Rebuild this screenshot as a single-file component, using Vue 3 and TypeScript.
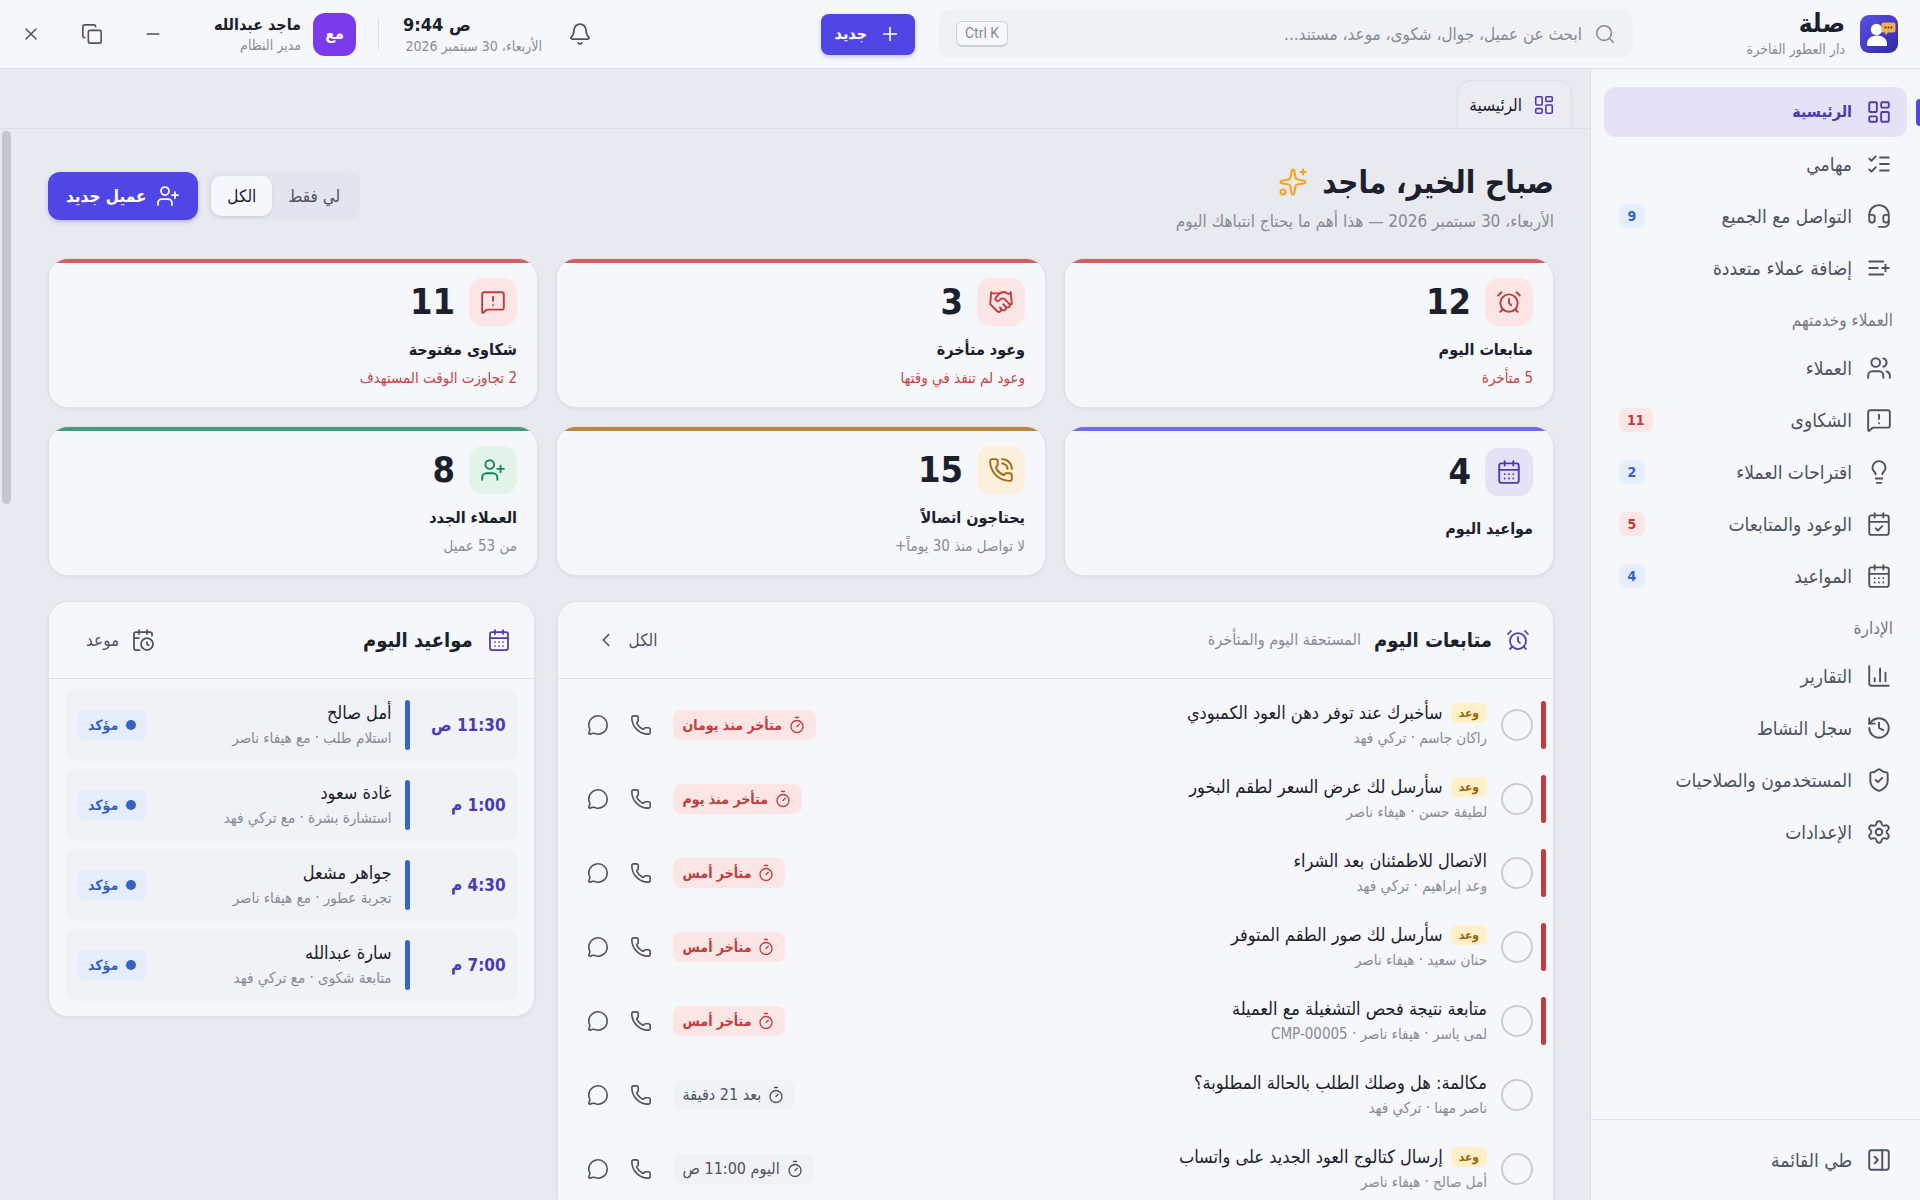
<script setup lang="ts">
import { h, ref } from 'vue'

type Tone = 'red' | 'blue' | 'indigo' | 'amber' | 'green'

const calendarBase = '<path d="M8 2v4M16 2v4M3 10h18"/><rect width="18" height="18" x="3" y="4" rx="2"/>'
const phonePath =
  '<path d="M13.832 16.568a1 1 0 0 0 1.213-.303l.355-.465A2 2 0 0 1 17 15h3a2 2 0 0 1 2 2v3a2 2 0 0 1-2 2A18 18 0 0 1 2 4a2 2 0 0 1 2-2h3a2 2 0 0 1 2 2v3a2 2 0 0 1-.8 1.6l-.468.351a1 1 0 0 0-.292 1.233 14 14 0 0 0 6.392 6.384"/>'

const icons: Record<string, string> = {
  dashboard:
    '<rect width="7" height="9" x="3" y="3" rx="1"/><rect width="7" height="5" x="14" y="3" rx="1"/><rect width="7" height="9" x="14" y="12" rx="1"/><rect width="7" height="5" x="3" y="16" rx="1"/>',
  checks: '<path d="m3 17 2 2 4-4M3 7l2 2 4-4M13 6h8M13 12h8M13 18h8"/>',
  headset:
    '<path d="M3 11h3a2 2 0 0 1 2 2v3a2 2 0 0 1-2 2H5a2 2 0 0 1-2-2v-5Zm0 0a9 9 0 1 1 18 0m0 0v5a2 2 0 0 1-2 2h-1a2 2 0 0 1-2-2v-3a2 2 0 0 1 2-2h3Z"/><path d="M21 16v2a4 4 0 0 1-4 4h-5"/>',
  listPlus: '<path d="M11 12H3M16 6H3M16 18H3M18 9v6M21 12h-6"/>',
  users:
    '<path d="M16 21v-2a4 4 0 0 0-4-4H6a4 4 0 0 0-4 4v2"/><circle cx="9" cy="7" r="4"/><path d="M22 21v-2a4 4 0 0 0-3-3.87M16 3.13a4 4 0 0 1 0 7.75"/>',
  complaint:
    '<path d="M22 17a2 2 0 0 1-2 2H6.828a2 2 0 0 0-1.414.586l-2.202 2.202A.71.71 0 0 1 2 21.286V5a2 2 0 0 1 2-2h16a2 2 0 0 1 2 2z"/><path d="M12 15h.01M12 7v4"/>',
  bulb: '<path d="M15 14c.2-1 .7-1.7 1.5-2.5 1-.9 1.5-2.2 1.5-3.5A6 6 0 0 0 6 8c0 1 .2 2.2 1.5 3.5.7.7 1.3 1.5 1.5 2.5M9 18h6M10 22h4"/>',
  calendarCheck: calendarBase + '<path d="m9 16 2 2 4-4"/>',
  calendarDays: calendarBase + '<path d="M8 14h.01M12 14h.01M16 14h.01M8 18h.01M12 18h.01M16 18h.01"/>',
  calendarClock:
    '<path d="M16 14v2.2l1.6 1M16 2v4M21 7.5V6a2 2 0 0 0-2-2H5a2 2 0 0 0-2 2v14a2 2 0 0 0 2 2h3.5M3 10h5M8 2v4"/><circle cx="16" cy="16" r="6"/>',
  chart: '<path d="M3 3v16a2 2 0 0 0 2 2h16M18 17V9M13 17V5M8 17v-3"/>',
  history: '<path d="M3 12a9 9 0 1 0 9-9 9.75 9.75 0 0 0-6.74 2.74L3 8"/><path d="M3 3v5h5M12 7v5l4 2"/>',
  shield:
    '<path d="M20 13c0 5-3.5 7.5-7.66 8.95a1 1 0 0 1-.67-.01C7.5 20.5 4 18 4 13V6a1 1 0 0 1 1-1c2 0 4.5-1.2 6.24-2.72a1.17 1.17 0 0 1 1.52 0C14.51 3.81 17 5 19 5a1 1 0 0 1 1 1z"/><path d="m9 12 2 2 4-4"/>',
  settings:
    '<path d="M9.671 4.136a2.34 2.34 0 0 1 4.659 0 2.34 2.34 0 0 0 3.319 1.915 2.34 2.34 0 0 1 2.33 4.033 2.34 2.34 0 0 0 0 3.831 2.34 2.34 0 0 1-2.33 4.033 2.34 2.34 0 0 0-3.319 1.915 2.34 2.34 0 0 1-4.659 0 2.34 2.34 0 0 0-3.32-1.915 2.34 2.34 0 0 1-2.33-4.033 2.34 2.34 0 0 0 0-3.831A2.34 2.34 0 0 1 6.35 6.051a2.34 2.34 0 0 0 3.319-1.915"/><circle cx="12" cy="12" r="3"/>',
  panelClose: '<rect width="18" height="18" x="3" y="3" rx="2"/><path d="M15 3v18M8 9l3 3-3 3"/>',
  search: '<path d="m21 21-4.34-4.34"/><circle cx="11" cy="11" r="8"/>',
  plus: '<path d="M5 12h14M12 5v14"/>',
  minus: '<path d="M5 12h14"/>',
  close: '<path d="M18 6 6 18M6 6l12 12"/>',
  copy: '<rect width="14" height="14" x="8" y="8" rx="2"/><path d="M4 16c-1.1 0-2-.9-2-2V4c0-1.1.9-2 2-2h10c1.1 0 2 .9 2 2"/>',
  bell: '<path d="M10.268 21a2 2 0 0 0 3.464 0M3.262 15.326A1 1 0 0 0 4 17h16a1 1 0 0 0 .74-1.673C19.41 13.956 18 12.499 18 8A6 6 0 0 0 6 8c0 4.499-1.411 5.956-2.738 7.326"/>',
  sparkles:
    '<path d="M11.017 2.814a1 1 0 0 1 1.966 0l1.051 5.558a2 2 0 0 0 1.594 1.594l5.558 1.051a1 1 0 0 1 0 1.966l-5.558 1.051a2 2 0 0 0-1.594 1.594l-1.051 5.558a1 1 0 0 1-1.966 0l-1.051-5.558a2 2 0 0 0-1.594-1.594l-5.558-1.051a1 1 0 0 1 0-1.966l5.558-1.051a2 2 0 0 0 1.594-1.594zM20 2v4M22 4h-4"/><circle cx="4" cy="20" r="2"/>',
  userPlus: '<path d="M16 21v-2a4 4 0 0 0-4-4H6a4 4 0 0 0-4 4v2M19 8v6M22 11h-6"/><circle cx="9" cy="7" r="4"/>',
  alarm:
    '<circle cx="12" cy="13" r="8"/><path d="M12 9v4l2 2M5 3 2 6M22 6l-3-3M6.38 18.7 4 21M17.64 18.67 20 21"/>',
  handshake:
    '<path d="m11 17 2 2a1 1 0 1 0 3-3"/><path d="m14 14 2.5 2.5a1 1 0 1 0 3-3l-3.88-3.88a3 3 0 0 0-4.24 0l-.88.88a1 1 0 1 1-3-3l2.81-2.81a5.79 5.79 0 0 1 7.06-.87l.47.28a2 2 0 0 0 1.42.25L21 4"/><path d="m21 3 1 11h-2M3 3 2 14l6.5 6.5a1 1 0 1 0 3-3M3 4h8"/>',
  phone: phonePath,
  phoneCall: '<path d="M13 2a9 9 0 0 1 9 9M13 6a5 5 0 0 1 5 5"/>' + phonePath,
  chat: '<path d="M2.992 16.342a2 2 0 0 1 .094 1.167l-1.065 3.29a1 1 0 0 0 1.236 1.168l3.413-.998a2 2 0 0 1 1.099.092 10 10 0 1 0-4.777-4.719"/>',
  timer: '<path d="M10 2h4M12 14l3-3"/><circle cx="12" cy="14" r="8"/>',
  chevron: '<path d="m15 18-6-6 6-6"/>',
}

const Icon = (props: { name: string; size: number }) =>
  h('svg', {
    width: props.size,
    height: props.size,
    viewBox: '0 0 24 24',
    fill: 'none',
    stroke: 'currentColor',
    'stroke-width': 1.75,
    'stroke-linecap': 'round',
    'stroke-linejoin': 'round',
    'aria-hidden': 'true',
    innerHTML: icons[props.name],
  })
Icon.props = ['name', 'size']

interface NavItem {
  label: string
  icon: string
  badge?: number
  tone?: Tone
  active?: boolean
}

const navGroups: { title?: string; items: NavItem[] }[] = [
  {
    items: [
      { label: 'الرئيسية', icon: 'dashboard', active: true },
      { label: 'مهامي', icon: 'checks' },
      { label: 'التواصل مع الجميع', icon: 'headset', badge: 9, tone: 'blue' },
      { label: 'إضافة عملاء متعددة', icon: 'listPlus' },
    ],
  },
  {
    title: 'العملاء وخدمتهم',
    items: [
      { label: 'العملاء', icon: 'users' },
      { label: 'الشكاوى', icon: 'complaint', badge: 11, tone: 'red' },
      { label: 'اقتراحات العملاء', icon: 'bulb', badge: 2, tone: 'blue' },
      { label: 'الوعود والمتابعات', icon: 'calendarCheck', badge: 5, tone: 'red' },
      { label: 'المواعيد', icon: 'calendarDays', badge: 4, tone: 'blue' },
    ],
  },
  {
    title: 'الإدارة',
    items: [
      { label: 'التقارير', icon: 'chart' },
      { label: 'سجل النشاط', icon: 'history' },
      { label: 'المستخدمون والصلاحيات', icon: 'shield' },
      { label: 'الإعدادات', icon: 'settings' },
    ],
  },
]

const stats: { value: number; label: string; note?: string; alert?: boolean; icon: string; tone: Tone }[] = [
  { value: 12, label: 'متابعات اليوم', note: '5 متأخرة', alert: true, icon: 'alarm', tone: 'red' },
  { value: 3, label: 'وعود متأخرة', note: 'وعود لم تنفذ في وقتها', alert: true, icon: 'handshake', tone: 'red' },
  { value: 11, label: 'شكاوى مفتوحة', note: '2 تجاوزت الوقت المستهدف', alert: true, icon: 'complaint', tone: 'red' },
  { value: 4, label: 'مواعيد اليوم', icon: 'calendarDays', tone: 'indigo' },
  { value: 15, label: 'يحتاجون اتصالاً', note: 'لا تواصل منذ 30 يوماً+', icon: 'phoneCall', tone: 'amber' },
  { value: 8, label: 'العملاء الجدد', note: 'من 53 عميل', icon: 'userPlus', tone: 'green' },
]

const tasks: { title: string; meta: string; due: string; late?: boolean; promise?: boolean }[] = [
  { title: 'سأخبرك عند توفر دهن العود الكمبودي', meta: 'راكان جاسم · تركي فهد', due: 'متأخر منذ يومان', late: true, promise: true },
  { title: 'سأرسل لك عرض السعر لطقم البخور', meta: 'لطيفة حسن · هيفاء ناصر', due: 'متأخر منذ يوم', late: true, promise: true },
  { title: 'الاتصال للاطمئنان بعد الشراء', meta: 'وعد إبراهيم · تركي فهد', due: 'متأخر أمس', late: true },
  { title: 'سأرسل لك صور الطقم المتوفر', meta: 'حنان سعيد · هيفاء ناصر', due: 'متأخر أمس', late: true, promise: true },
  { title: 'متابعة نتيجة فحص التشغيلة مع العميلة', meta: 'لمى ياسر · هيفاء ناصر · CMP-00005', due: 'متأخر أمس', late: true },
  { title: 'مكالمة: هل وصلك الطلب بالحالة المطلوبة؟', meta: 'ناصر مهنا · تركي فهد', due: 'بعد 21 دقيقة' },
  { title: 'إرسال كتالوج العود الجديد على واتساب', meta: 'أمل صالح · هيفاء ناصر', due: 'اليوم 11:00 ص', promise: true },
]

const appointments = [
  { time: '11:30 ص', name: 'أمل صالح', meta: 'استلام طلب · مع هيفاء ناصر' },
  { time: '1:00 م', name: 'غادة سعود', meta: 'استشارة بشرة · مع تركي فهد' },
  { time: '4:30 م', name: 'جواهر مشعل', meta: 'تجربة عطور · مع هيفاء ناصر' },
  { time: '7:00 م', name: 'سارة عبدالله', meta: 'متابعة شكوى · مع تركي فهد' },
]

const scope = ref<'mine' | 'all'>('all')
const query = ref('')
</script>

<template>
  <div class="app" dir="rtl">
    <header class="topbar">
      <div class="brand">
        <svg class="logo" viewBox="0 0 38 38" aria-hidden="true">
          <defs>
            <linearGradient id="logoFill" x1="0" y1="0" x2="1" y2="1">
              <stop offset="0" stop-color="#5b52e6" />
              <stop offset="1" stop-color="#3127a6" />
            </linearGradient>
          </defs>
          <rect width="38" height="38" rx="9" fill="url(#logoFill)" />
          <circle cx="16.5" cy="14.5" r="5.7" fill="#fff" />
          <path d="M7 31v-2c0-5 4-8.500 10-8.500s10 3.500 10 8.500v2z" fill="#fff" />
          <path d="M23.500 7.500h10a2 2 0 0 1 2 2v6a2 2 0 0 1-2 2H28l-2.500 2.800-.5-2.800h-1.500a2 2 0 0 1-2-2v-6a2 2 0 0 1 2-2z" fill="#f2b04e" />
          <g fill="#4a3a2a">
            <circle cx="25.500" cy="12.500" r="1" />
            <circle cx="28.500" cy="12.500" r="1" />
            <circle cx="31.500" cy="12.500" r="1" />
          </g>
        </svg>
        <div class="brand-text">
          <strong>صلة</strong>
          <span>دار العطور الفاخرة</span>
        </div>
      </div>

      <label class="search">
        <Icon name="search" :size="22" />
        <input v-model="query" type="search" aria-label="بحث" placeholder="ابحث عن عميل، جوال، شكوى، موعد، مستند..." />
        <kbd dir="ltr">Ctrl K</kbd>
      </label>
      <button class="new-btn" type="button"><Icon name="plus" :size="22" />جديد</button>

      <div class="spacer"></div>

      <button class="icon-btn bell" type="button" aria-label="الإشعارات"><Icon name="bell" :size="24" /></button>
      <div class="clock">
        <strong dir="ltr">9:44 ص</strong>
        <span>الأربعاء، 30 سبتمبر 2026</span>
      </div>
      <div class="divider"></div>
      <button class="user" type="button">
        <span class="avatar">مع</span>
        <span class="user-text">
          <strong>ماجد عبدالله</strong>
          <span>مدير النظام</span>
        </span>
      </button>
      <div class="window-btns">
        <button type="button" aria-label="تصغير"><Icon name="minus" :size="20" /></button>
        <button type="button" aria-label="استعادة"><Icon name="copy" :size="22" /></button>
        <button type="button" aria-label="إغلاق"><Icon name="close" :size="20" /></button>
      </div>
    </header>

    <div class="body">
      <aside class="sidebar">
        <nav class="nav">
          <template v-for="(group, g) in navGroups" :key="g">
            <h2 v-if="group.title" class="nav-title">{{ group.title }}</h2>
            <a
              v-for="item in group.items"
              :key="item.label"
              href="#"
              class="nav-item"
              :class="{ active: item.active }"
              :aria-current="item.active ? 'page' : undefined"
            >
              <Icon :name="item.icon" :size="26" />
              <span class="nav-label">{{ item.label }}</span>
              <span v-if="item.badge" class="badge" :class="item.tone">{{ item.badge }}</span>
            </a>
          </template>
        </nav>
        <div class="sidebar-foot">
          <button class="nav-item" type="button">
            <Icon name="panelClose" :size="26" />
            <span class="nav-label">طي القائمة</span>
          </button>
        </div>
      </aside>

      <main class="main">
        <div class="tabs">
          <a href="#" class="tab"><Icon name="dashboard" :size="22" />الرئيسية</a>
        </div>

        <div class="scroller">
          <div class="content">
            <section class="hello">
              <div>
                <h1>صباح الخير، ماجد <Icon name="sparkles" :size="30" /></h1>
                <p>الأربعاء، 30 سبتمبر 2026 — هذا أهم ما يحتاج انتباهك اليوم</p>
              </div>
              <div class="hello-actions">
                <div class="segmented">
                  <button type="button" :aria-pressed="scope === 'mine'" @click="scope = 'mine'">لي فقط</button>
                  <button type="button" :aria-pressed="scope === 'all'" @click="scope = 'all'">الكل</button>
                </div>
                <button class="primary-btn" type="button"><Icon name="userPlus" :size="24" />عميل جديد</button>
              </div>
            </section>

            <section class="stats">
              <article v-for="s in stats" :key="s.label" class="stat" :class="[s.tone, { short: !s.note }]">
                <div class="stat-head">
                  <span class="stat-icon" :class="s.tone"><Icon :name="s.icon" :size="26" /></span>
                  <strong>{{ s.value }}</strong>
                </div>
                <h3>{{ s.label }}</h3>
                <p v-if="s.note" :class="{ alert: s.alert }">{{ s.note }}</p>
              </article>
            </section>

            <section class="panels">
              <article class="panel">
                <header class="panel-head">
                  <Icon class="panel-icon" name="alarm" :size="24" />
                  <h2>متابعات اليوم</h2>
                  <span class="panel-sub">المستحقة اليوم والمتأخرة</span>
                  <button class="ghost-btn" type="button">الكل<Icon name="chevron" :size="22" /></button>
                </header>
                <ul class="tasks">
                  <li v-for="t in tasks" :key="t.title" class="task" :class="{ late: t.late }">
                    <span class="task-bar"></span>
                    <input type="checkbox" :aria-label="t.title" />
                    <div class="task-text">
                      <div class="task-title"><span v-if="t.promise" class="promise">وعد</span>{{ t.title }}</div>
                      <div class="meta">{{ t.meta }}</div>
                    </div>
                    <span class="due"><Icon name="timer" :size="18" />{{ t.due }}</span>
                    <div class="task-btns">
                      <button type="button" aria-label="اتصال"><Icon name="phone" :size="22" /></button>
                      <button type="button" aria-label="مراسلة"><Icon name="chat" :size="22" /></button>
                    </div>
                  </li>
                </ul>
              </article>

              <article class="panel">
                <header class="panel-head">
                  <Icon class="panel-icon" name="calendarDays" :size="24" />
                  <h2>مواعيد اليوم</h2>
                  <button class="ghost-btn" type="button"><Icon name="calendarClock" :size="24" />موعد</button>
                </header>
                <ul class="appointments">
                  <li v-for="a in appointments" :key="a.name" class="appointment">
                    <time>{{ a.time }}</time>
                    <span class="appointment-bar"></span>
                    <div class="appointment-text">
                      <div class="task-title">{{ a.name }}</div>
                      <div class="meta">{{ a.meta }}</div>
                    </div>
                    <span class="status">مؤكد</span>
                  </li>
                </ul>
              </article>
            </section>
          </div>
          <div class="scrollbar"><div class="thumb"></div></div>
        </div>
      </main>
    </div>
  </div>
</template>

<style>
body {
  margin: 0;
  background: #e8eaef;
}
</style>

<style scoped>
.app {
  --surface: #f6f7fb;
  --line: #dcdfe5;
  --ink: #1a212c;
  --mid: #4b535f;
  --soft: #868c96;
  --indigo: #4f46e5;
  --indigo-ink: #4a3cb0;
  height: 100vh;
  display: flex;
  flex-direction: column;
  overflow: hidden;
  background: #e8eaef;
  color: var(--ink);
  font-family: 'DejaVu Sans Condensed', 'DejaVu Sans', sans-serif;
  font-size: 16px;
  line-height: 24px;
}
* {
  box-sizing: border-box;
}
svg {
  flex: none;
  display: block;
}
h1,
h2,
h3,
p,
ul {
  margin: 0;
  padding: 0;
  list-style: none;
}
button {
  font: inherit;
  color: inherit;
  border: 0;
  background: none;
  padding: 0;
  cursor: pointer;
}
a {
  color: inherit;
  text-decoration: none;
}

/* top bar */
.topbar {
  flex: none;
  height: 69px;
  display: flex;
  align-items: center;
  padding-inline-start: 22px;
  background: var(--surface);
  border-bottom: 1px solid var(--line);
}
.brand {
  flex: none;
  width: 265px;
  display: flex;
  align-items: center;
  gap: 15px;
}
.logo {
  width: 38px;
  height: 38px;
}
.brand-text,
.clock,
.user-text {
  display: flex;
  flex-direction: column;
}
.brand-text strong {
  font-size: 26px;
  line-height: 30px;
}
.brand-text span {
  font-size: 14px;
  line-height: 22px;
  color: var(--soft);
}
.search {
  flex: 0 1 694px;
  height: 48px;
  display: flex;
  align-items: center;
  gap: 12px;
  padding: 0 17px;
  border-radius: 12px;
  background: #eff1f5;
  color: var(--soft);
}
.search input {
  flex: 1;
  min-width: 0;
  border: 0;
  outline: 0;
  padding: 0;
  background: none;
  font: inherit;
  font-size: 17px;
  color: var(--ink);
}
.search input::placeholder {
  color: var(--soft);
  opacity: 1;
}
.search kbd {
  height: 26px;
  padding: 0 8px;
  border: 1px solid #ccd0d7;
  border-bottom-width: 2px;
  border-radius: 6px;
  background: var(--surface);
  font: 14px/22px 'Roboto', sans-serif;
}
.new-btn,
.primary-btn {
  display: flex;
  align-items: center;
  color: #fff;
  font-weight: 700;
  background: var(--indigo);
  box-shadow: 0 2px 4px rgba(79, 70, 229, 0.3);
}
.new-btn {
  height: 41px;
  margin-inline-start: 24px;
  padding: 0 14px;
  gap: 12px;
  border-radius: 8px;
}
.spacer {
  flex: 1;
}
.icon-btn,
.window-btns button {
  display: grid;
  place-items: center;
  color: var(--mid);
}
.bell {
  width: 44px;
  height: 44px;
  margin-inline-end: 16px;
}
.clock {
  width: 139px;
}
.clock strong {
  font-size: 18px;
  line-height: 24px;
}
.clock span,
.user-text span {
  font-size: 14px;
  line-height: 18px;
  color: var(--soft);
  white-space: nowrap;
}
.divider {
  width: 1px;
  height: 32px;
  margin-inline: 24px 22px;
  background: var(--line);
}
.user {
  display: flex;
  align-items: center;
  gap: 12px;
  text-align: start;
}
.avatar {
  width: 43px;
  height: 43px;
  display: grid;
  place-items: center;
  border-radius: 12px;
  background: #7c3aed;
  color: #fff;
  font-weight: 700;
}
.user-text {
  width: 90px;
}
.user-text strong {
  font-size: 16px;
  line-height: 22px;
  white-space: nowrap;
}
.window-btns {
  display: flex;
  margin-inline-start: 28px;
}
.window-btns button {
  width: 61px;
  height: 68px;
}

/* side navigation */
.body {
  flex: 1;
  min-height: 0;
  display: flex;
}
.sidebar {
  flex: none;
  width: 330px;
  display: flex;
  flex-direction: column;
  background: var(--surface);
  border-inline-end: 1px solid var(--line);
}
.nav {
  flex: 1;
  padding: 18px 13px;
  display: flex;
  flex-direction: column;
  gap: 2px;
}
.nav-title {
  height: 46px;
  padding-inline: 14px;
  font-size: 17px;
  font-weight: 400;
  line-height: 50px;
  color: #737984;
}
.nav-item {
  position: relative;
  width: 100%;
  height: 50px;
  display: flex;
  align-items: center;
  gap: 14px;
  padding-inline: 15px;
  border-radius: 12px;
  color: var(--mid);
  font-size: 19px;
}
.nav-item.active {
  background: #e5e2f8;
  color: var(--indigo-ink);
  font-size: 16px;
  font-weight: 700;
}
.nav-item.active::before {
  content: '';
  position: absolute;
  inset-inline-start: -13px;
  top: 12px;
  width: 4px;
  height: 27px;
  border-radius: 4px 0 0 4px;
  background: var(--indigo);
}
.nav-label {
  flex: 1;
  text-align: start;
}
.badge {
  height: 24px;
  min-width: 26px;
  padding: 0 8px;
  border-radius: 8px;
  font-size: 14px;
  font-weight: 700;
  text-align: center;
}
.red {
  background: #fbe6e5;
  color: #c53a3a;
}
.blue {
  background: #e5edfa;
  color: #3563c4;
}
.indigo {
  background: #e5e2f8;
  color: var(--indigo-ink);
}
.amber {
  background: #fcefdc;
  color: #a9690f;
}
.green {
  background: #e2f4ea;
  color: #16835a;
}
.sidebar-foot {
  padding: 15px 13px;
  border-top: 1px solid var(--line);
}

/* main column */
.main {
  flex: 1;
  min-width: 0;
  display: flex;
  flex-direction: column;
}
.tabs {
  flex: none;
  height: 60px;
  display: flex;
  align-items: flex-end;
  padding-inline: 18px;
  border-bottom: 1px solid var(--line);
}
.tab {
  height: 48px;
  display: flex;
  align-items: center;
  gap: 11px;
  padding-inline: 16px 11px;
  border: 1px solid var(--line);
  border-bottom: 0;
  border-radius: 14px 14px 0 0;
  background: #eaecf1;
  font-size: 17px;
}
.tab svg,
.panel-icon {
  color: var(--indigo-ink);
}
.scroller {
  flex: 1;
  min-height: 0;
  display: flex;
  overflow: hidden;
}
.scrollbar {
  flex: none;
  width: 12px;
  padding: 2px 1px 2px 2px;
}
.thumb {
  height: 35%;
  border-radius: 5px;
  background: #c3c8cf;
}
.content {
  flex: 1;
  min-width: 0;
  padding: 32px 36px;
}
.hello {
  display: flex;
  align-items: flex-start;
  justify-content: space-between;
  margin-bottom: 19px;
}
.hello h1 {
  display: flex;
  align-items: center;
  gap: 14px;
  font-size: 31px;
  line-height: 42px;
}
.hello h1 svg {
  color: #f5a524;
}
.hello p {
  color: var(--soft);
  font-size: 17px;
  line-height: 36px;
}
.hello-actions {
  display: flex;
  gap: 9px;
  padding-top: 11px;
  font-size: 17px;
}
.segmented {
  display: flex;
  padding: 4px;
  border-radius: 12px;
  background: #e2e5ee;
}
.segmented button {
  height: 40px;
  padding: 0 16px;
  border-radius: 10px;
  color: var(--mid);
}
.segmented button[aria-pressed='true'] {
  background: var(--surface);
  color: var(--ink);
  box-shadow: 0 1px 3px rgba(20, 30, 50, 0.12);
}
.primary-btn {
  height: 48px;
  padding: 0 18px;
  gap: 10px;
  border-radius: 12px;
}

/* stat cards */
.stats {
  display: grid;
  grid-template-columns: repeat(3, 1fr);
  gap: 18px;
  margin-bottom: 25px;
}
.stat,
.panel {
  background: var(--surface);
  border: 1px solid #e0e2e8;
  border-radius: 20px;
  box-shadow: 0 1px 3px rgba(20, 30, 50, 0.07);
  overflow: hidden;
}
.stat {
  position: relative;
  height: 150px;
  padding: 19px 20px;
  background: var(--surface);
}
.stat::before {
  content: '';
  position: absolute;
  inset: -1px -1px auto;
  height: 5px;
  background: currentColor;
  opacity: 0.8;
}
.stat.indigo {
  color: var(--indigo);
}
.stat-head {
  display: flex;
  align-items: center;
  gap: 14px;
  margin-bottom: 10px;
}
.stat-icon {
  width: 48px;
  height: 48px;
  display: grid;
  place-items: center;
  border-radius: 14px;
}
.stat-head strong {
  font-size: 36px;
  line-height: 48px;
  color: var(--ink);
}
.stat h3 {
  font-size: 16px;
  line-height: 28px;
  font-weight: 700;
  color: var(--ink);
}
.stat p {
  font-size: 15px;
  line-height: 28px;
  color: var(--soft);
}
.stat p.alert {
  color: #c94444;
}
.stat.short {
  padding-top: 21px;
}
.short .stat-head {
  margin-bottom: 19px;
}

/* panels */
.panels {
  display: grid;
  grid-template-columns: 41fr 20fr;
  gap: 22px;
  align-items: start;
}
.panel-head {
  height: 77px;
  display: flex;
  align-items: center;
  padding-inline: 23px;
  border-bottom: 1px solid var(--line);
}
.panel-head h2 {
  margin-inline: 14px 13px;
  font-size: 20px;
}
.panel-sub {
  color: var(--soft);
}
.ghost-btn {
  display: flex;
  align-items: center;
  gap: 12px;
  margin-inline: auto 14px;
  color: var(--mid);
  font-size: 17px;
}
.tasks {
  padding: 9px 7px;
}
.task {
  min-height: 74px;
  display: flex;
  align-items: center;
}
.task-bar,
.appointment-bar {
  flex: none;
  width: 5px;
  height: 48px;
  border-radius: 3px;
}
.late .task-bar {
  background: #c53a3a;
}
.task input {
  appearance: none;
  flex: none;
  width: 32px;
  height: 32px;
  margin: 0;
  margin-inline: 8px 14px;
  border: 2px solid #c9ccd4;
  border-radius: 50%;
}
.task-text,
.appointment-text {
  flex: 1;
  min-width: 0;
}
.task-title {
  display: flex;
  align-items: center;
  gap: 8px;
  font-size: 18px;
  line-height: 26px;
}
.meta {
  font-size: 15px;
  line-height: 24px;
  color: var(--soft);
}
.promise {
  height: 20px;
  padding: 0 8px;
  border-radius: 6px;
  background: #fff0c9;
  color: #9a6508;
  font-size: 12px;
  font-weight: 700;
  line-height: 20px;
}
.due {
  height: 30px;
  display: flex;
  align-items: center;
  gap: 6px;
  padding: 0 10px;
  border-radius: 8px;
  background: #f0f2f5;
  color: var(--mid);
  font-size: 16px;
}
.late .due {
  background: #fbe6e5;
  color: #c53a3a;
  font-size: 14px;
  font-weight: 700;
}
.task-btns {
  display: flex;
  margin-inline: 10px 12px;
}
.task-btns button {
  width: 43px;
  height: 42px;
  display: grid;
  place-items: center;
  color: var(--mid);
}
.appointments {
  display: flex;
  flex-direction: column;
  gap: 8px;
  padding: 10px 16px 15px;
}
.appointment {
  height: 72px;
  display: flex;
  align-items: center;
  padding-inline: 12px;
  border-radius: 12px;
  background: #f0f2f5;
}
.appointment time {
  width: 96px;
  color: var(--indigo-ink);
  font-size: 17px;
  font-weight: 700;
}
.appointment-bar {
  height: 50px;
  margin-inline-end: 13px;
  background: #3465c8;
}
.status {
  height: 30px;
  display: flex;
  align-items: center;
  gap: 8px;
  padding: 0 11px;
  border-radius: 8px;
  background: #e5edfa;
  color: #3563c4;
  font-size: 14px;
  font-weight: 700;
}
.status::before {
  content: '';
  width: 10px;
  height: 10px;
  border-radius: 50%;
  background: currentColor;
}
</style>
